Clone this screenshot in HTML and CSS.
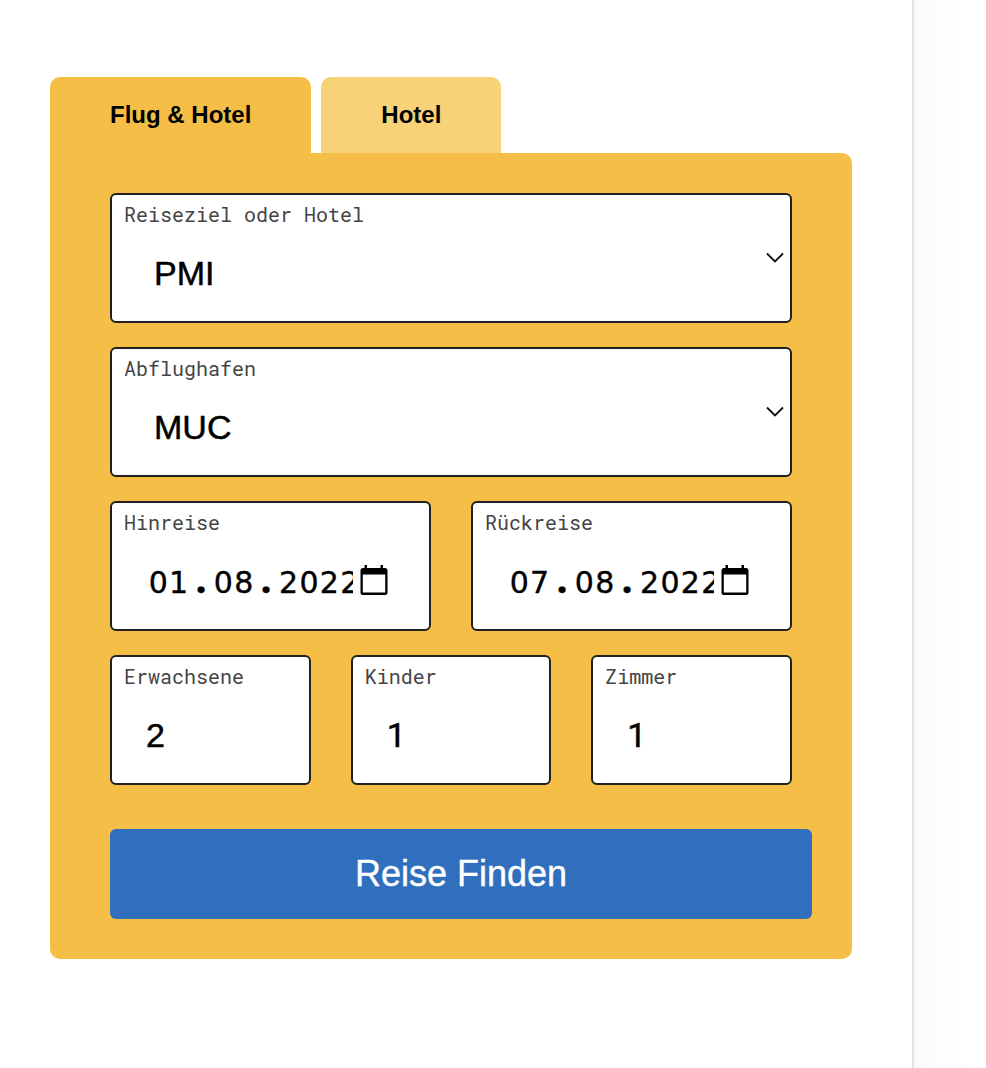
FILE: index.html
```html
<!DOCTYPE html>
<html lang="de">
<head>
<meta charset="utf-8">
<title>Reise Finden</title>
<link rel="stylesheet" href="styles.css">
</head>
<body>
<main class="page">
  <div class="search">
    <nav class="tabs">
      <a class="tab active">Flug &amp; Hotel</a>
      <a class="tab">Hotel</a>
    </nav>
    <form class="panel">
      <div class="fields">
        <div class="field">
          <label class="label">Reiseziel oder Hotel</label>
          <div class="value select">PMI</div>
          <svg class="chevron" width="18" height="12" viewBox="0 0 18 12"><path d="M1 1.5 9 9.5 17 1.5"/></svg>
        </div>
        <div class="field">
          <label class="label">Abflughafen</label>
          <div class="value select">MUC</div>
          <svg class="chevron" width="18" height="12" viewBox="0 0 18 12"><path d="M1 1.5 9 9.5 17 1.5"/></svg>
        </div>
        <div class="row">
          <div class="field">
            <label class="label">Hinreise</label>
            <div class="date">
              <div class="digits"><span>0</span><span>1</span><span class="dot">.</span><span>0</span><span>8</span><span class="dot">.</span><span>2</span><span>0</span><span>2</span><span>2</span></div>
              <svg class="calendar" width="28" height="31" viewBox="0 0 28 31"><path class="solid" d="M3 3H4.500V0H7V3H20.500V0H23V3H25Q27.500 3 27.500 5.500V27.500Q27.500 30 25 30H3Q.5 30 .5 27.500V5.500Q.5 3 3 3Z"/><path class="sheet" d="M2.800 9.500H25.200V27.500H2.800Z"/></svg>
            </div>
          </div>
          <div class="field">
            <label class="label">Rückreise</label>
            <div class="date">
              <div class="digits"><span>0</span><span>7</span><span class="dot">.</span><span>0</span><span>8</span><span class="dot">.</span><span>2</span><span>0</span><span>2</span><span>2</span></div>
              <svg class="calendar" width="28" height="31" viewBox="0 0 28 31"><path class="solid" d="M3 3H4.500V0H7V3H20.500V0H23V3H25Q27.500 3 27.500 5.500V27.500Q27.500 30 25 30H3Q.5 30 .5 27.500V5.500Q.5 3 3 3Z"/><path class="sheet" d="M2.800 9.500H25.200V27.500H2.800Z"/></svg>
            </div>
          </div>
        </div>
        <div class="row">
          <div class="field"><label class="label">Erwachsene</label><div class="value number">2</div></div>
          <div class="field"><label class="label">Kinder</label><div class="value number one">1</div></div>
          <div class="field"><label class="label">Zimmer</label><div class="value number one">1</div></div>
        </div>
      </div>
      <button class="submit" type="button">Reise Finden</button>
    </form>
  </div>
</main>
<aside class="gutter"></aside>
</body>
</html>
```
FILE: styles.css
```css
* { box-sizing: border-box; }
body {
  margin: 0;
  display: flex;
  height: 1068px;
  overflow: hidden;
  background: #fff;
  color: #000;
  font-family: "Liberation Sans", Arial, sans-serif;
}
.page {
  width: 914px;
  padding: 77px 60px 0 50px;
  border-right: 2px solid #e3e3e3;
}
.gutter {
  flex: 1;
  background: linear-gradient(90deg, #f9f9f9, #fdfdfd 28px, #fff 50px);
}
.tabs { display: flex; gap: 10px; }
.tab {
  height: 76px;
  padding: 0 60px;
  border-radius: 10px 10px 0 0;
  background: #f8d276;
  font-size: 24px;
  font-weight: 700;
  line-height: 76px;
  white-space: nowrap;
}
.tab.active { background: #f5be47; }
.panel {
  height: 806px;
  padding: 40px 40px 40px 60px;
  border-radius: 0 10px 10px 10px;
  background: #f5be47;
}
.fields {
  display: flex;
  flex-direction: column;
  gap: 24px;
  width: 682px;
}
.row { display: flex; gap: 40px; }
.field {
  position: relative;
  flex: 1 1 0;
  min-width: 0;
  min-height: 130px;
  padding: 6px 12px;
  border: 2px solid #202020;
  border-radius: 6px;
  background: #fff;
}
.label {
  display: block;
  height: 26px;
  color: #444;
  font-family: "Roboto Mono", "DejaVu Sans Mono", monospace;
  font-size: 20px;
  line-height: 26px;
}
.value {
  font-size: 34px;
  line-height: 40px;
  -webkit-text-stroke: .5px #000;
}
.select { padding: 26px 0 0 30px; }
.number { padding: 26px 0 0 22px; }
.one { font-family: Roboto, "Liberation Sans", sans-serif; }
.chevron {
  position: absolute;
  right: 6px;
  top: 57px;
  fill: none;
  stroke: #111;
  stroke-width: 1.8;
}
.date { display: flex; padding: 23px 0 0 24px; }
.digits {
  display: flex;
  align-items: baseline;
  width: 205px;
  height: 48px;
  overflow: hidden;
  font-family: "DejaVu Sans", sans-serif;
  font-size: 30px;
  line-height: 42px;
  -webkit-text-stroke: .4px #000;
}
.digits span { flex: 0 0 20.4px; text-align: center; }
.digits .dot {
  flex-basis: 24.4px;
  font-family: "Roboto Mono", monospace;
  font-size: 36px;
  font-weight: 700;
}
.calendar { margin: 7px 0 0 7px; }
.solid { fill: #000; }
.sheet { fill: #fff; }
.submit {
  display: block;
  width: 702px;
  height: 90px;
  margin-top: 44px;
  padding: 0;
  border: 0;
  border-radius: 6px;
  background: #2f6fbd;
  color: #fff;
  font: 36px/90px "Liberation Sans", Arial, sans-serif;
  -webkit-text-stroke: .4px #fff;
}
```
